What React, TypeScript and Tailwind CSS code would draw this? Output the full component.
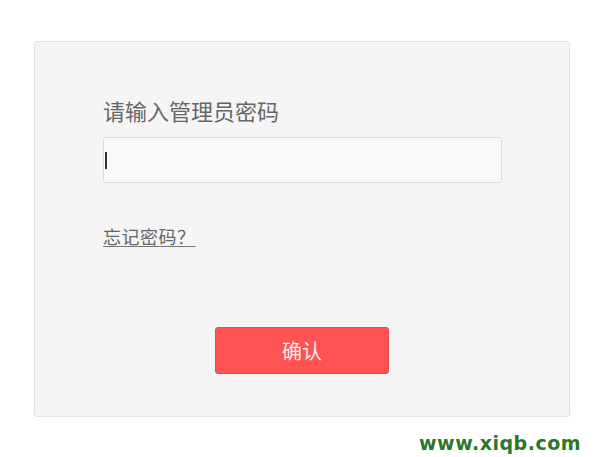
import React from 'react';

const cjk = { fontFamily: '"Microsoft YaHei", "Noto Sans CJK SC", "Noto Sans", sans-serif' };

const LoginCard: React.FC = () => {
  return (
    <div className="ml-[34px] mt-[41px] h-[376px] w-[536px] rounded-[3px] border border-[#e2e2e2] bg-[#f5f5f5] pl-[68px] pt-[55px]">
      <label className="block text-[22px] leading-[26px] text-[#666666]" style={cjk}>
        请输入管理员密码
      </label>

      <div className="mt-[14px] flex h-[46px] w-[399px] items-center rounded-[3px] border border-[#dcdcdc] bg-[#fafafa] pl-[1px]">
        {/* caret */}
        <div className="h-[17px] w-[2px] bg-[#333333]" />
      </div>

      <a
        href="#"
        className="mt-[42px] inline-block text-[18px] leading-[22px] tracking-[0.5px] text-[#666666] underline decoration-[#777777] underline-offset-[2px]"
        style={cjk}
      >
        忘记密码？
      </a>

      <div className="-ml-[68px] mt-[77px] flex justify-center">
        <button
          className="h-[47px] w-[174px] rounded-[3px] border border-[#e84848] bg-[#ff5252] text-[20px] text-[#ffeef0]"
          style={cjk}
        >
          确认
        </button>
      </div>
    </div>
  );
};

export default function App() {
  return (
    <div className="h-[457px] w-[600px] overflow-hidden bg-white">
      <LoginCard />
      <div className="flex justify-end pr-[19px] pt-[14px]">
        <span
          className="text-[19px] font-bold leading-[24px] tracking-[0.5px] text-[#2c762c]"
          style={{ fontFamily: '"DejaVu Sans", Verdana, sans-serif' }}
        >
          www.xiqb.com
        </span>
      </div>
    </div>
  );
}
